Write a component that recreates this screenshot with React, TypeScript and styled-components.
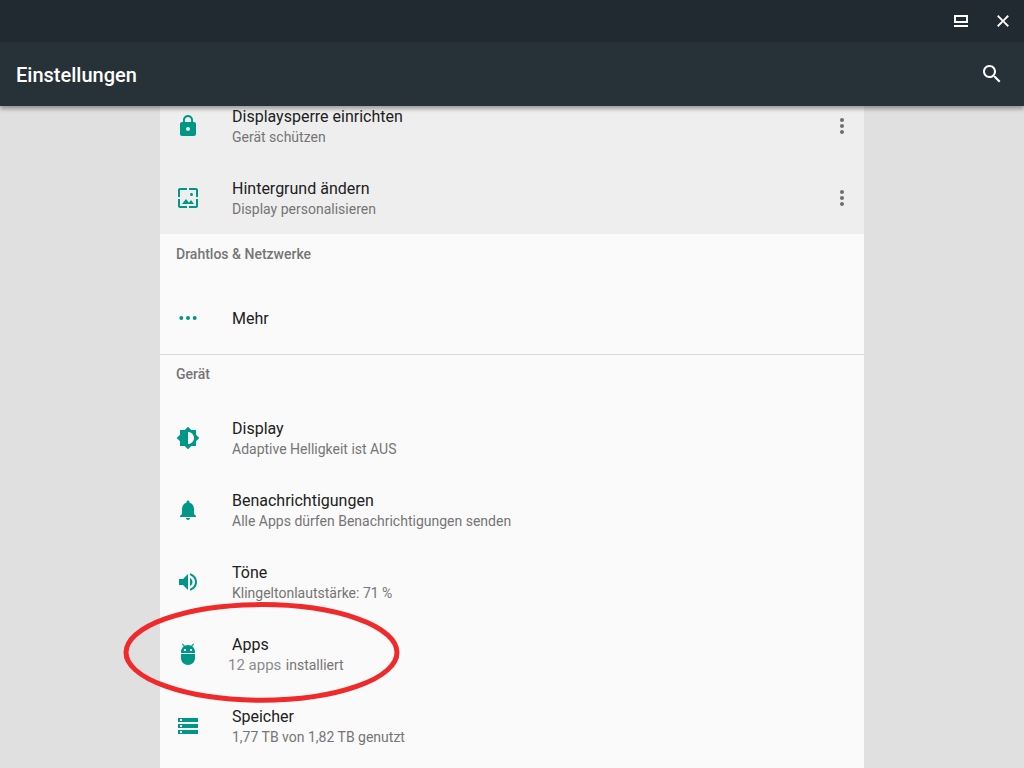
import React from 'react';
import styled, { createGlobalStyle } from 'styled-components';

const GlobalStyle = createGlobalStyle`
  *, *::before, *::after { box-sizing: border-box; }
  body {
    margin: 0;
    background: #e0e0e0;
    color: #212121;
    font-family: Roboto, "Noto Sans", sans-serif;
  }
  button { font: inherit; color: inherit; border: 0; padding: 0; background: none; cursor: pointer; }
`;

const Screen = styled.div`
  height: 100vh;
  display: flex;
  flex-direction: column;
`;

const TopArea = styled.header`
  position: relative;
  z-index: 1;
  flex: none;
  color: #fff;
  background: #263238;
  box-shadow: 0 3px 4px rgba(0, 0, 0, 0.34);
`;

const WindowBar = styled.div`
  height: 42px;
  padding-right: 9px;
  display: flex;
  align-items: center;
  justify-content: flex-end;
  gap: 18px;
  background: #212a30;
`;

const AppBar = styled.div`
  height: 64px;
  padding: 0 20px 0 16px;
  display: flex;
  align-items: center;
  justify-content: space-between;
`;

const PageTitle = styled.h1`
  margin: 0;
  padding-top: 2px;
  font-size: 20px;
  line-height: 24px;
  font-weight: 500;
`;

const IconButton = styled.button`
  width: 24px;
  height: 24px;
  display: flex;
  flex: none;
`;

const Glyph = styled.svg<{ $color?: string }>`
  width: 24px;
  height: 24px;
  flex: none;
  display: block;
  fill: ${(p) => p.$color ?? 'currentColor'};
`;

const Scroller = styled.main`
  flex: 1;
  min-height: 0;
  overflow-y: auto;
  scrollbar-width: none;
`;

/* The list is shown slightly scrolled, its first row partly under the bar. */
const Panel = styled.div`
  max-width: 704px;
  min-height: 100%;
  margin: -16px auto 0;
  padding-bottom: 16px;
  background: #fafafa;
`;

const Suggestions = styled.ul`
  margin: 0;
  padding: 0;
  list-style: none;
  background: #eee;
`;

const Section = styled.section`
  & + & { box-shadow: inset 0 1px 0 #d9d9d9; }
`;

const SectionTitle = styled.h2`
  margin: 0;
  height: 48px;
  padding: 10px 16px 0;
  font-size: 14px;
  line-height: 20px;
  font-weight: 500;
  color: #757575;
`;

const List = styled.ul`
  margin: 0;
  padding: 0;
  list-style: none;
`;

const Row = styled.li`
  position: relative;
  height: 72px;
  padding-right: 10px;
  display: flex;
  align-items: center;
`;

const RowButton = styled.button`
  flex: 1;
  align-self: stretch;
  padding-left: 16px;
  display: flex;
  align-items: center;
  gap: 32px;
  text-align: left;
`;

const Labels = styled.span`
  padding-top: 2px;
  display: flex;
  flex-direction: column;
`;

const Label = styled.span`
  font-size: 16px;
  line-height: 20px;
`;

const Summary = styled.span`
  font-size: 14px;
  line-height: 20px;
  color: #757575;
`;

const Count = styled.span`
  margin: 0 1px 0 -4px;
  font-size: 15px;
  line-height: 16px;
  color: #8c8c8c;
`;

const Ring = styled.svg`
  position: absolute;
  left: -37px;
  top: -16px;
  width: 277px;
  height: 101px;
  pointer-events: none;
`;

const paths = {
  search:
    'M15.5 14h-.79l-.28-.27C15.41 12.59 16 11.11 16 9.5 16 5.91 13.09 3 9.5 3S3 5.91 3 9.5 5.91 16 9.5 16c1.61 0 3.09-.59 4.23-1.57l.27.28v.79l5 4.99L20.49 19l-4.99-5zm-6 0C7.01 14 5 11.99 5 9.5S7.01 5 9.5 5 14 7.01 14 9.5 11.99 14 9.5 14z',
  close: 'M17.9 7.4L16.6 6.1 12 10.7 7.4 6.1 6.1 7.4 10.7 12 6.1 16.6 7.4 17.9 12 13.3 16.6 17.9 17.9 16.6 13.3 12z',
  restore: 'M5 6h14v8H5zM7 8v4h10V8zM5 16h14v2H5z',
  more: 'M12 8c1.1 0 2-.9 2-2s-.9-2-2-2-2 .9-2 2 .9 2 2 2zm0 2c-1.1 0-2 .9-2 2s.9 2 2 2 2-.9 2-2-.9-2-2-2zm0 6c-1.1 0-2 .9-2 2s.9 2 2 2 2-.9 2-2-.9-2-2-2z',
  lock: 'M18 8h-1V6c0-2.76-2.24-5-5-5S7 3.24 7 6v2H6c-1.1 0-2 .9-2 2v10c0 1.1.9 2 2 2h12c1.1 0 2-.9 2-2V10c0-1.1-.9-2-2-2zm-6 9c-1.1 0-2-.9-2-2s.9-2 2-2 2 .9 2 2-.9 2-2 2zm3.1-9H8.9V6c0-1.71 1.39-3.1 3.1-3.1 1.71 0 3.1 1.39 3.1 3.1v2z',
  wallpaper:
    'M4 4h7V2H4c-1.1 0-2 .9-2 2v7h2V4zm6 9l-4 5h12l-3-4-2.03 2.71L10 13zm7-4.5c0-.83-.67-1.5-1.5-1.5S14 7.67 14 8.5s.67 1.5 1.5 1.5S17 9.33 17 8.5zM20 2h-7v2h7v7h2V4c0-1.1-.9-2-2-2zm0 18h-7v2h7c1.1 0 2-.9 2-2v-7h-2v7zM4 13H2v7c0 1.1.9 2 2 2h7v-2H4v-7z',
  dots: 'M7.3 12a2 2 0 1 1-4 0 2 2 0 0 1 4 0zM14 12a2 2 0 1 1-4 0 2 2 0 0 1 4 0zM20.7 12a2 2 0 1 1-4 0 2 2 0 0 1 4 0z',
  brightness:
    'M20 15.31L23.31 12 20 8.69V4h-4.69L12 .69 8.69 4H4v4.69L.69 12 4 15.31V20h4.69L12 23.31 15.31 20H20v-4.69zM12 18V6c3.31 0 6 2.69 6 6s-2.69 6-6 6z',
  bell: 'M12 22c1.1 0 2-.9 2-2h-4c0 1.1.89 2 2 2zm6-6v-5c0-3.07-1.64-5.64-4.5-6.32V4c0-.83-.67-1.5-1.5-1.5s-1.5.67-1.5 1.5v.68C7.63 5.36 6 7.92 6 11v5l-2 2v1h16v-1l-2-2z',
  volume:
    'M3 9v6h4l5 5V4L7 9H3zm13.5 3c0-1.77-1.02-3.29-2.5-4.03v8.05c1.48-.73 2.5-2.25 2.5-4.02zM14 3.23v2.06c2.89.86 5 3.54 5 6.71s-2.11 5.85-5 6.71v2.06c4.01-.91 7-4.49 7-8.77s-2.99-7.86-7-8.77z',
  android:
    'M5 16c0 3.87 3.13 7 7 7s7-3.13 7-7v-4H5v4zM16.12 4.37l2.1-2.1-.82-.83-2.3 2.31C14.16 3.28 13.12 3 12 3s-2.16.28-3.09.75L6.6 1.44l-.82.83 2.1 2.1C6.14 5.64 5 7.68 5 10v1h14v-1c0-2.32-1.14-4.36-2.88-5.63zM9 9c-.55 0-1-.45-1-1s.45-1 1-1 1 .45 1 1-.45 1-1 1zm6 0c-.55 0-1-.45-1-1s.45-1 1-1 1 .45 1 1-.45 1-1 1z',
  storage: 'M2 20h20v-4H2v4zm2-3h2v2H4v-2zM2 4v4h20V4H2zm4 3H4V5h2v2zm-4 7h20v-4H2v4zm2-3h2v2H4v-2z',
};

type IconName = keyof typeof paths;

function Icon({ name, color }: { name: IconName; color?: string }) {
  return (
    <Glyph viewBox="0 0 24 24" $color={color} aria-hidden="true">
      <path fillRule="evenodd" d={paths[name]} />
    </Glyph>
  );
}

interface ItemProps {
  icon: IconName;
  label: string;
  summary?: React.ReactNode;
  menu?: boolean;
  ringed?: boolean;
}

function Item({ icon, label, summary, menu, ringed }: ItemProps) {
  return (
    <Row>
      <RowButton type="button">
        <Icon name={icon} color="#009688" />
        <Labels>
          <Label>{label}</Label>
          {summary && <Summary>{summary}</Summary>}
        </Labels>
      </RowButton>
      {menu && (
        <IconButton type="button" aria-label={`Optionen: ${label}`}>
          <Icon name="more" color="#6e6e6e" />
        </IconButton>
      )}
      {ringed && (
        <Ring viewBox="0 0 277 101" aria-hidden="true">
          <ellipse cx="138.5" cy="50.4" rx="135.5" ry="47.8" fill="none" stroke="#f02a2a" strokeWidth="5" />
        </Ring>
      )}
    </Row>
  );
}

export default function App() {
  return (
    <Screen>
      <GlobalStyle />
      <TopArea>
        <WindowBar>
          <IconButton type="button" aria-label="Wiederherstellen">
            <Icon name="restore" />
          </IconButton>
          <IconButton type="button" aria-label="Schließen">
            <Icon name="close" />
          </IconButton>
        </WindowBar>
        <AppBar>
          <PageTitle>Einstellungen</PageTitle>
          <IconButton type="button" aria-label="Suchen">
            <Icon name="search" />
          </IconButton>
        </AppBar>
      </TopArea>
      <Scroller>
        <Panel>
          <Suggestions>
            <Item icon="lock" label="Displaysperre einrichten" summary="Gerät schützen" menu />
            <Item icon="wallpaper" label="Hintergrund ändern" summary="Display personalisieren" menu />
          </Suggestions>
          <Section>
            <SectionTitle>Drahtlos &amp; Netzwerke</SectionTitle>
            <List>
              <Item icon="dots" label="Mehr" />
            </List>
          </Section>
          <Section>
            <SectionTitle>Gerät</SectionTitle>
            <List>
              <Item icon="brightness" label="Display" summary="Adaptive Helligkeit ist AUS" />
              <Item icon="bell" label="Benachrichtigungen" summary="Alle Apps dürfen Benachrichtigungen senden" />
              <Item icon="volume" label="Töne" summary="Klingeltonlautstärke: 71 %" />
              <Item
                icon="android"
                label="Apps"
                summary={
                  <>
                    <Count>12 apps</Count> installiert
                  </>
                }
                ringed
              />
              <Item icon="storage" label="Speicher" summary="1,77 TB von 1,82 TB genutzt" />
            </List>
          </Section>
        </Panel>
      </Scroller>
    </Screen>
  );
}
